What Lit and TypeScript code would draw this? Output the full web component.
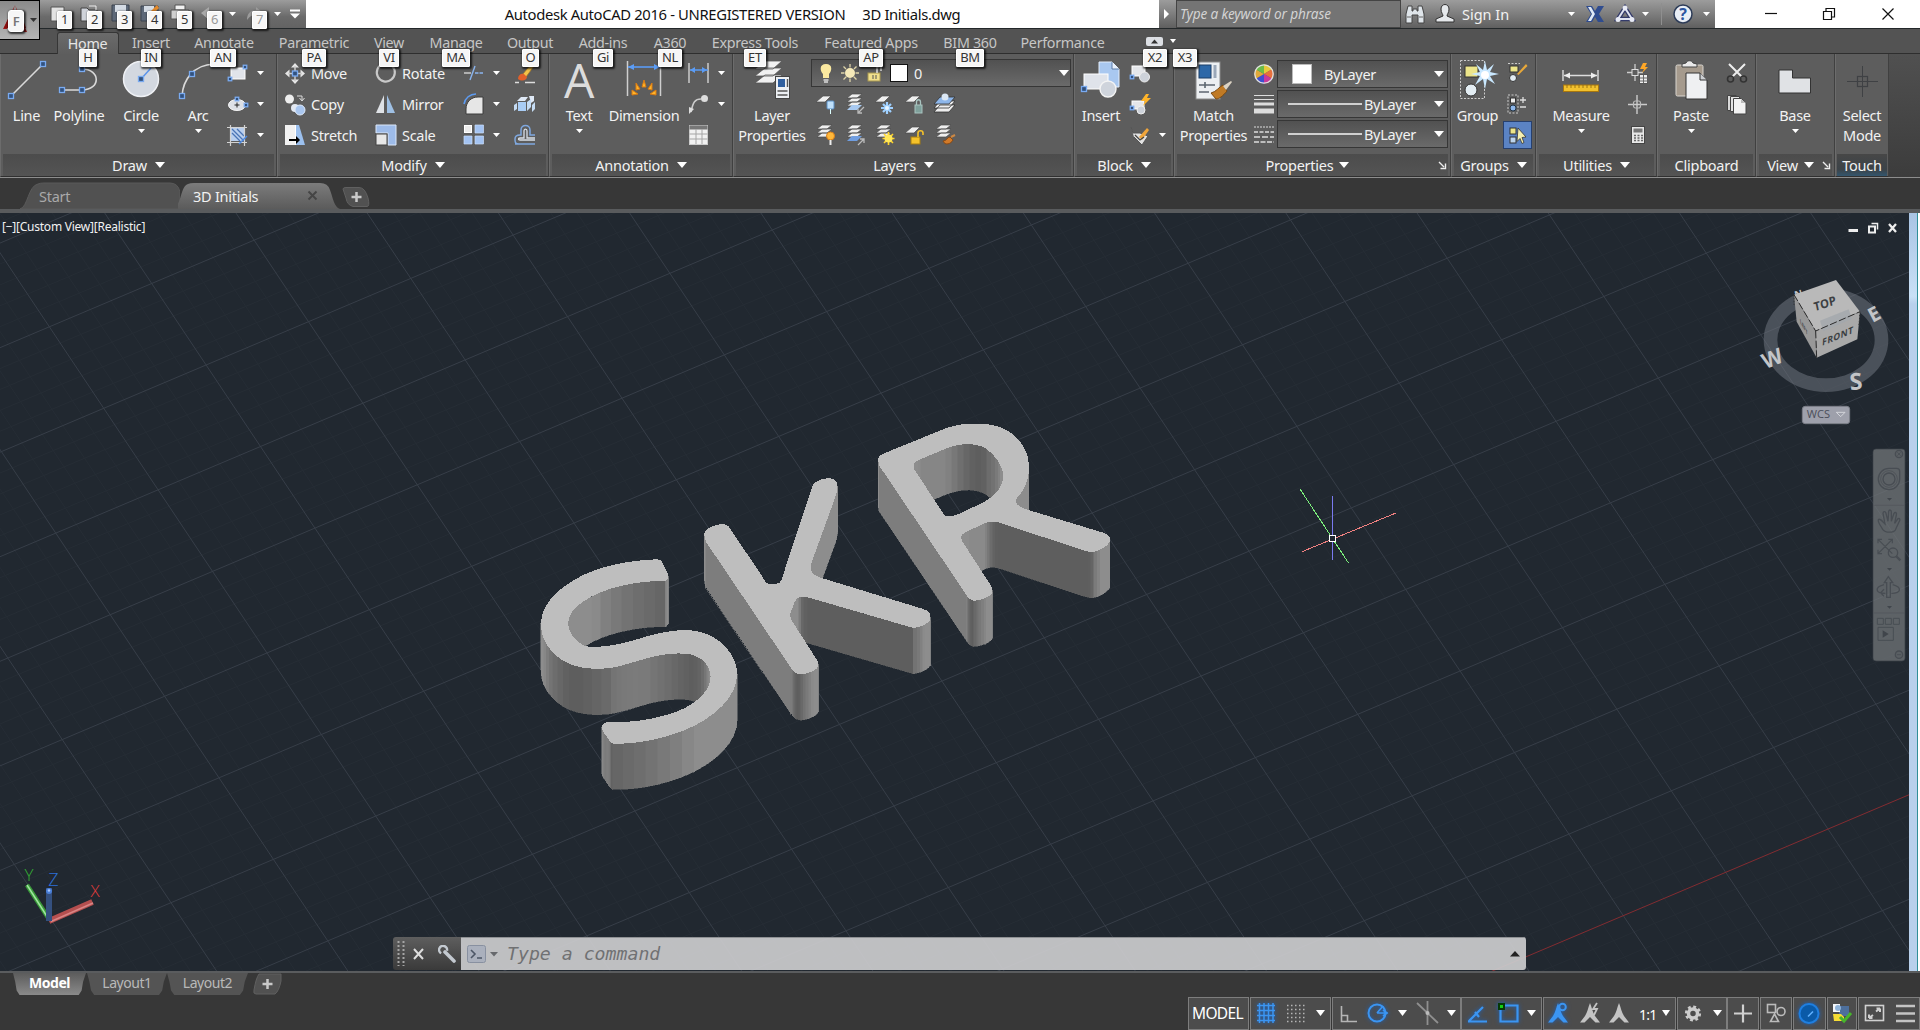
import { LitElement, html, svg, css, nothing } from "lit";
import { customElement } from "lit/decorators.js";

type Cell = [left: number, width: number, content: unknown];

/* Lays cells out in a flex row; each left edge is turned into the gap from the previous cell. */
const row = (origin: number, cells: Cell[], cls = "cell") => {
  let x = origin;
  return cells.map(([left, width, content]) => {
    const gap = left - x;
    x = left + width;
    return html`<div class=${cls} style="margin-left:${gap}px;width:${width}px">${content}</div>`;
  });
};

const icon = (w: number, h: number, body: unknown, box = `0 0 ${w} ${h}`) =>
  html`<svg class="ic" width=${w} height=${h} viewBox=${box} fill="none">${body}</svg>`;

const node = (x: number, y: number, s = 5) =>
  svg`<rect x=${x - s / 2} y=${y - s / 2} width=${s} height=${s} fill="#32527e" stroke="#79aaf0" stroke-width="1.3"/>`;

const arrow = (w = 7, h = 4) => icon(w, h, svg`<path d="M0 0H${w}L${w / 2} ${h}Z" fill="#fff"/>`);

/* ---------- large ribbon icons (40 x 44) ---------- */
const B = {
  line: svg`<path d="M5 38L36 7" stroke="#d9d9d9" stroke-width="1.6"/>${node(4, 39)}${node(36, 7)}`,
  polyline: svg`<path d="M3 33H23C42 33 42 12 23 12" stroke="#d9d9d9" stroke-width="1.6"/>${node(3, 33)}${node(23, 33)}${node(23, 12)}`,
  circle: svg`<circle cx="20" cy="22" r="17.5" fill="#d3d8e0" stroke="#eef0f4" stroke-width="1.5"/><path d="M20 22L30 11" stroke="#5b94ea" stroke-width="1.5"/>${node(20, 22)}`,
  arc: svg`<path d="M4 39C5 23 15 8 36 7" stroke="#d9d9d9" stroke-width="1.6"/>${node(4, 39)}${node(14, 17)}${node(36, 7)}`,
  dimension: svg`<path d="M3.500 4V39M36.500 4V39" stroke="#cfcfcf" stroke-width="1.5"/><path d="M4 10H36" stroke="#5b9cf5" stroke-width="1.6"/><path d="M4 10l6-3v6zM36 10l-6-3v6z" fill="#5b9cf5"/><path d="M20 23l2 7h-4zM12 26l4 6-4 1zM28 26l-4 6 4 1zM8 33l6 4-6 1zM32 33l-6 4 6 1z" fill="#ffb52b" stroke="#d97a12" stroke-width="1"/>`,
  layers: svg`<path d="M13 4h17l-9 8H3z M13 11h17l-9 8H3z M13 18h17l-9 8H3z" fill="#f1f1f1" stroke="#555" stroke-width=".8"/><rect x="23.500" y="19.500" width="14" height="22" fill="#eceff3" stroke="#444"/><rect x="26" y="22" width="7" height="8" fill="#2f5f9f"/><path d="M25.500 34h10M25.500 38h10M35.500 22v8" stroke="#555" stroke-width="1.4"/>`,
  insert: svg`<path d="M18 5h13l7 7v18H18z" fill="#a9c8f0" stroke="#e4eefc"/><path d="M31 5v7h7" fill="#e8f1fc" stroke="#5d7da8"/><rect x="3" y="17" width="24" height="15" fill="#dfe3ea" stroke="#fff"/><circle cx="27" cy="32" r="8" fill="#cfd4dc" stroke="#f4f4f4" stroke-width="1.4"/>${node(3, 32)}`,
  match: svg`<rect x="2" y="5" width="24" height="37" fill="#eceff2" stroke="#8a8a8a"/><rect x="5" y="8" width="12" height="13" fill="#2d68a8" stroke="#1d3e66"/><path d="M21 8v13" stroke="#9aa7b8" stroke-width="3"/><path d="M5 28h16M5 35h10M11 25v6" stroke="#5c6670" stroke-width="1.6"/><path d="M17 36c5-1 8-6 12-8l4 6c-4 5-8 8-11 8z" fill="#c07a25" stroke="#7a4a12"/><path d="M29 29l8-5 1 1-6 8z" fill="#dcd3c4"/>`,
  group: svg`<rect x="2.500" y="3.500" width="24" height="38" stroke="#ccc" stroke-dasharray="2 1.500"/><rect x="7" y="9" width="13" height="11" fill="#ece58a" stroke="#333"/><circle cx="13" cy="33" r="6" fill="#e3edf3" stroke="#333"/><path d="M27 4l2 9 7-6-4 8 9 2-9 2 5 8-8-5-2 10-2-10-8 6 5-9-9-2 9-2-4-8 7 6z" fill="#c9e8ff"/><circle cx="27" cy="18" r="4" fill="#fff"/>`,
  measure: svg`<path d="M2 13v11M37 13v11M3 18.500h33" stroke="#ddd" stroke-width="1.4"/><path d="M3 18.500l6-3v6zM36 18.500l-6-3v6z" fill="#eee"/><rect x="2.500" y="28" width="35" height="6.500" fill="#f2c12e" stroke="#a8770f"/><path d="M6 28v3m4-3v3m4-3v3m4-3v3m4-3v3m4-3v3m4-3v3m4-3v3" stroke="#8a6510" stroke-width=".8"/>`,
  paste: svg`<rect x="5" y="8" width="27" height="31" rx="1.500" fill="#a59a8d" stroke="#dad6d0"/><path d="M11 10V7l4-1c1-3 6-3 7 0l4 1v3z" fill="#e9e9e9" stroke="#444"/><path d="M15 16h14l7 7v19H15z" fill="#eff0f2" stroke="#333"/><path d="M29 16v7h7" fill="#cdd0d4" stroke="#333"/>`,
  base: svg`<path d="M4 13h13.500v8h18v15H4z" fill="#e0e2e5" stroke="#333"/>`,
  select: svg`<path d="M20.500 9v31M5 24.500h31" stroke="#3f4144"/><rect x="15.500" y="19.500" width="10" height="10" stroke="#3f4144" stroke-width="1.200"/>`,
};

/* ---------- small ribbon icons (22 x 22) ---------- */
const stack = (c = "#efefef") =>
  svg`<path d="M7 1h10l-5 4H2z M7 5h10l-5 4H2z M7 9h10l-5 4H2z" fill=${c} stroke="#4b4b4b" stroke-width=".7"/>`;
const sheet = svg`<path d="M8 3h8l-6 6H1z" fill="#efefef" stroke="#4b4b4b" stroke-width=".7"/>`;

const S = {
  rect: svg`<rect x="4" y="6" width="14" height="11" fill="#e1e4ea" stroke="#fff"/>${node(18, 5, 3.5)}${node(3, 17, 3.5)}`,
  ellipse: svg`<ellipse cx="10" cy="12" rx="8.500" ry="5.500" fill="#dde0e6" stroke="#f5f5f5"/><path d="M10 9.500v5M7.500 12h5" stroke="#222"/>${node(10, 6, 3.5)}${node(19, 12, 3.5)}`,
  hatch: svg`<rect x="4" y="4" width="13" height="13" fill="#b9cfee"/><path d="M5 9l8 8M5 5l12 12M10 5l7 7" stroke="#4a74b5" stroke-width="1.3"/><path d="M3.500 1v21M17.500 1v21M0 3.500h20M0 18.500h20" stroke="#d3d3d3" stroke-width="1.2"/><path d="M12 20l8-8" stroke="#4d8be6" stroke-width="1.5"/>`,
  move: svg`<path d="M11 1l4 4.500H7zM11 22l4-4.500H7zM1 11.500l4.500-4v8zM21 11.500l-4.500-4v8z" fill="#e6e6e6"/><path d="M11 4v15M4 11.500h14" stroke="#ccc" stroke-width="1.500"/>${node(11, 11.5, 5)}`,
  copy: svg`<circle cx="5.500" cy="6" r="4.500" fill="#eee"/><circle cx="11" cy="15" r="4" fill="#e4e9f2"/><circle cx="16" cy="17" r="5" fill="#a9c6ef" stroke="#dfeafa"/><path d="M13 3h5v4m-2.500-2L18 8l2.500-3" stroke="#ddd"/>`,
  stretch: svg`<path d="M1 1h11v20H1z" fill="#f1f1f1"/><path d="M12 1h3l6 20h-9z" fill="#9cc0ee"/><path d="M11.500 1v20" stroke="#fff"/><path d="M5 15h7v-3l4 4-4 4v-3H5z" fill="#000"/>`,
  rotate: svg`<path d="M17 4a9 9 0 1 1-9-2" stroke="#c9c9c9" stroke-width="2.200"/>`,
  mirror: svg`<path d="M9 2v18H1z" fill="#dfe2e6"/><path d="M12 2v18h8z" fill="#9fc0e4"/>`,
  scale: svg`<path d="M1 1h20v20h-8V9H1z" fill="#9dbbe9" stroke="#dbe7f8"/><rect x="1" y="10" width="11" height="11" fill="#e7e7e7" stroke="#444"/>`,
  trim: svg`<path d="M12 4L7 18" stroke="#8ab4ee" stroke-width="1.400"/><path d="M1 11h7" stroke="#ccc" stroke-width="1.500"/><path d="M12 11h9" stroke="#8ab4ee" stroke-width="1.400" stroke-dasharray="3.500 1"/>`,
  fillet: svg`<path d="M3 21V16C3 9 8 4 15 4h5v17z" fill="#e6e6e6" stroke="#3d3d3d"/><path d="M1 11C2 5 7 1 13 1" stroke="#5e9bf0" stroke-width="1.600"/>`,
  array: svg`<rect x="1.500" y="1.500" width="7" height="7" fill="#ececec" stroke="#fff"/><path d="M12 1h8.500v8H12zM1 12h8v8H1zM12 12h8.500v8H12z" fill="#a3c3f2" stroke="#c8dcfa" stroke-width=".7"/>`,
  erase: svg`<path d="M9 12L18 1l2 3-8 11z" fill="#f2c14a" stroke="#a87820" stroke-width=".7"/><path d="M4 17c0-4 3-6 6-5l3 3c0 3-5 5-9 2z" fill="#e0602b"/><path d="M1 20.500h4M11 20.500h10" stroke="#ddd" stroke-width="1.500"/>`,
  explode: svg`<path d="M3 8l4-4h7l-3 4zM15 3h5v5l-3 2z" fill="#dfe9f6"/><rect x="4" y="9" width="8" height="9" fill="#a9cdf5"/><path d="M13 9l4-3v8l-4 4zM18 12l3-3v7l-3 3zM0 12l3-2v6l-3 2z" fill="#c5dcf4"/>`,
  offset: svg`<path d="M1 20h20M1 15c0-3 2-4 5-4h1V6c0-6 9-6 9 0v5h5M1 15c0 3 0 5 4 5" stroke="#7fa8df" stroke-width="1.500"/><path d="M21 16H6c-2 0-2-2 0-2h4V7c0-2.500 3-2.500 3 0v7h8" stroke="#d9dfe8" stroke-width="1.300"/>`,
  linear: svg`<path d="M1 1v20M20 1v20" stroke="#ccc" stroke-width="1.500"/><path d="M2 8h18" stroke="#5b9cf5" stroke-width="1.500"/><path d="M2 8l5-3v6zM19 8l-5-3v6z" fill="#5b9cf5"/>`,
  leader: svg`<path d="M3 19C5 9 7 6 13 6" stroke="#ccc" stroke-width="1.600"/><circle cx="16.500" cy="5.500" r="3.500" fill="#ddd"/><path d="M1 21l0-7 5 2z" fill="#ddd"/>`,
  table: svg`<rect x="1.500" y="1.500" width="18" height="19" fill="#f1f1f1" stroke="#ccc"/><path d="M1.500 3.500h18" stroke="#777" stroke-width="4"/><path d="M1.500 10h18M1.500 15h18M8 5v15M14 5v15" stroke="#a5a5a5"/>`,
  l1: svg`${sheet}<rect x="12" y="8" width="7" height="8" rx="1" fill="#bfe0fb" stroke="#5a8fc5"/><path d="M15.500 16v5" stroke="#dff"/>`,
  l2: svg`${stack()}<path d="M7 12h10l-5 5H2z" fill="#a8c9f0"/><path d="M19 14l-6 6m0-4v4h4" stroke="#bbb" stroke-width="1.300"/>`,
  l3: svg`${sheet}<path d="M13 9v12M7 15h12M9 11l8 8M17 11l-8 8" stroke="#9fd0ff" stroke-width="2.200"/><circle cx="13" cy="15" r="2" fill="#e8f5ff"/>`,
  l4: svg`${sheet}<rect x="11" y="12" width="7" height="8" fill="#7fa09b" stroke="#a9c4c0"/><path d="M12.500 12V9c0-3 4-3 4 0v3" stroke="#a9c4c0" stroke-width="1.300"/>`,
  l5: svg`<path d="M6 12h15l-6 7H0zM6 8h15l-6 7H0z" fill="#eee" stroke="#333" stroke-width=".8"/><path d="M6 4h15l-6 7H0z" fill="#8db6ea" stroke="#333" stroke-width=".8"/><circle cx="11" cy="4" r="3.500" fill="#dce8f5"/>`,
  l6: svg`${stack()}<circle cx="15.500" cy="12" r="4" fill="#ffb83a" stroke="#d9801a"/><path d="M15.500 16v5" stroke="#eee" stroke-width="2"/>`,
  l7: svg`${stack()}<path d="M7 12h10l-5 5H2z" fill="#6f9de0"/><path d="M13 21l6-6m-4 0h4v4" stroke="#bbb" stroke-width="1.300"/>`,
  l8: svg`${stack()}<path d="M14.500 8v13M8.500 14.500h12M10 10l9 9M19 10l-9 9" stroke="#ffd42a" stroke-width="1.600"/><circle cx="14.500" cy="14.500" r="4" fill="#ffe75a"/>`,
  l9: svg`${sheet}<rect x="7" y="13" width="9" height="7" fill="#f5c22a" stroke="#a87f10"/><path d="M14 13V9c0-3 5-3 5 0v2" stroke="#f5c22a" stroke-width="1.600"/>`,
  l10: svg`${stack()}<path d="M9 17c4 0 4-4 7-4l3 3c-2 4-8 6-10 1z" fill="#d17a2a" stroke="#8a4a12"/><path d="M17 13l4-2" stroke="#c84" stroke-width="2"/>`,
  create: svg`<rect x="3" y="4" width="13" height="10" fill="#e4e6ea" stroke="#fff"/><circle cx="15.500" cy="15" r="5" fill="#cdd2da" stroke="#eee"/>${node(3, 15, 3.5)}`,
  edit: svg`<rect x="3" y="8" width="12" height="8" fill="#e4e6ea" stroke="#fff"/><circle cx="12" cy="17" r="4" fill="#cdd2da" stroke="#eee"/><path d="M17 1l-5 7h4l-2 5 8-8h-4l2-4z" fill="#ffb429"/>${node(3, 15, 3.5)}`,
  attr: svg`<path d="M2 3l2 6 7 0 8 3-6 9-8-8" fill="#e2e2e2" stroke="#555"/><path d="M10 13l8-9 2 2-7 10z" fill="#f0a53a"/><path d="M6 11l5 5 4-3" stroke="#444" stroke-width="1.300"/>`,
  lweights: svg`<path d="M1 2.500h20M1 6.500h20" stroke="#ddd" stroke-width="1.200"/><path d="M1 11h20" stroke="#ddd" stroke-width="3"/><path d="M1 18h20" stroke="#ddd" stroke-width="5"/>`,
  ltypes: svg`<path d="M1 3h20" stroke="#ddd" stroke-dasharray="2 1"/><path d="M1 8h20" stroke="#ddd" stroke-dasharray="4 1.500" stroke-width="1.300"/><path d="M1 13h20" stroke="#ddd" stroke-dasharray="6 2" stroke-width="1.500"/><path d="M1 18h20" stroke="#ddd" stroke-dasharray="5 1.500" stroke-width="1.500"/>`,
  wheel: svg`<path d="M11 12V2.500A9.500 9.500 0 0 1 19.200 7.200z" fill="#e8c93a"/><path d="M11 12L19.200 7.200A9.500 9.500 0 0 1 19.200 16.800z" fill="#e8703d"/><path d="M11 12L19.200 16.800A9.500 9.500 0 0 1 11 21.500z" fill="#c9399a"/><path d="M11 12V21.500A9.500 9.500 0 0 1 2.800 16.800z" fill="#3f4fd0"/><path d="M11 12L2.800 16.800A9.500 9.500 0 0 1 2.800 7.200z" fill="#e0a93a"/><path d="M11 12L2.800 7.200A9.500 9.500 0 0 1 11 2.500z" fill="#6cbb48"/><circle cx="11" cy="12" r="9.200" stroke="#e0e0e0" stroke-width="1.300"/>`,
  gedit: svg`<path d="M1 1.500h12" stroke="#ccc" stroke-dasharray="2 1.500"/><rect x="3" y="4" width="8" height="6" fill="#ece58a" stroke="#333"/><circle cx="6" cy="16" r="3.500" fill="#e3edf3" stroke="#333"/><path d="M10 12L19 2l1.500 2-9 9z" fill="#e8a83a"/>`,
  gadd: svg`<rect x="1" y="2" width="10" height="18" stroke="#ccc" stroke-dasharray="2 1.500"/><rect x="3.500" y="5" width="5" height="5" fill="#eee" stroke="#333"/><circle cx="6" cy="15" r="3" fill="#8db6ea" stroke="#234"/><path d="M13 7h6M16 4v6M13 14h6" stroke="#ddd" stroke-width="1.300"/>`,
  gsel: svg`<rect x="3" y="4" width="6" height="6" fill="#ece58a" stroke="#333"/><rect x="3" y="13" width="6" height="6" fill="#bcd4ee" stroke="#333"/><path d="M11 4l8 9-4 .5 2 5-2 1-2-5-3 3z" fill="#f5efb0" stroke="#333" stroke-width=".8"/>`,
  quick: svg`<path d="M8 2v6M8 13v6M0 10.500h5M11 10.500h5" stroke="#ccc" stroke-width="1.300"/><rect x="5" y="7.500" width="6" height="6" stroke="#ddd"/><path d="M16 1l-3 6h4l-2 4 6-6h-3l2-4z" fill="#ffa726"/><rect x="12.500" y="12.500" width="8" height="9" fill="#eee" stroke="#555"/><path d="M13 16h8M13 19h8M16.500 13v8" stroke="#666"/>`,
  point: svg`<path d="M10 2v19M1 11.500h19" stroke="#ccc" stroke-width="1.400"/><rect x="6.500" y="8" width="7" height="7" rx="2" stroke="#bbb" stroke-width="1.200"/>`,
  calc: svg`<rect x="4.500" y="2.500" width="13" height="17" fill="#e8e8e8" stroke="#444"/><rect x="6.500" y="4.500" width="9" height="4" fill="#777"/><path d="M7 11.500h9M7 14h9M7 16.500h9" stroke="#666" stroke-width="1.600" stroke-dasharray="2 1.500"/>`,
  cut: svg`<path d="M3 2l13 13M19 2L6 15" stroke="#eee" stroke-width="2"/><circle cx="4.500" cy="17" r="3" stroke="#333" stroke-width="1.600"/><circle cx="17.500" cy="17" r="3" stroke="#333" stroke-width="1.600"/>`,
  copyc: svg`<path d="M1.500 2.500h9v15h-9z" fill="#d9d9d9" stroke="#444"/><path d="M4.500 3.500h9v15h-9z" fill="#e2e2e2" stroke="#444"/><path d="M7.500 5.500h8l4.500 4.500v11H7.500z" fill="#f2f2f2" stroke="#444"/><path d="M15 6v4h5" fill="#bbb"/>`,
};

const launcher = icon(9, 9, svg`<path d="M1 1l5 5M7.500 2.500v5h-5" stroke="#eee" stroke-width="1.400"/>`);

const big = (body: unknown, lines: string[], drop = false) => html`<div class="big">
  ${icon(40, 44, body)}
  <div class="blabel">${lines.map((l) => html`<div>${l}</div>`)}</div>
  ${drop ? html`<div class="bdrop">${arrow()}</div>` : nothing}
</div>`;

const col = (items: unknown[]) => html`<div class="col">${items.map((i) => html`<div class="srow">${i}</div>`)}</div>`;
const s = (b: unknown) => icon(22, 22, b);
const arrows = (n: boolean[]) => col(n.map((v) => (v ? arrow() : nothing)));

interface Panel { x: number; w: number; title: string; drop?: boolean; launch?: boolean; touch?: boolean; cells: Cell[]; }

const combo = (body: unknown) => html`<div class="combo">${body}<span class="fill"></span>${arrow(10, 6)}</div>`;
const rule = html`<span class="rule"></span>`;

const PANELS: Panel[] = [
  { x: 0, w: 277, title: "Draw", drop: true, cells: [
    [4, 45, big(B.line, ["Line"])], [51, 56, big(B.polyline, ["Polyline"])], [116, 50, big(B.circle, ["Circle"], true)],
    [175, 46, big(B.arc, ["Arc"], true)], [227, 22, col([s(S.rect), s(S.ellipse), s(S.hatch)])], [257, 8, arrows([true, true, true])] ] },
  { x: 277, w: 272, title: "Modify", drop: true, cells: [
    [284, 22, col([s(S.move), s(S.copy), s(S.stretch)])], [311, 58, col(["Move", "Copy", "Stretch"])],
    [375, 22, col([s(S.rotate), s(S.mirror), s(S.scale)])], [402, 50, col(["Rotate", "Mirror", "Scale"])],
    [463, 22, col([s(S.trim), s(S.fillet), s(S.array)])], [493, 8, arrows([true, true, true])],
    [514, 22, col([s(S.erase), s(S.explode), s(S.offset)])] ] },
  { x: 549, w: 184, title: "Annotation", drop: true, cells: [
    [558, 42, html`<div class="big"><div class="glyphA">A</div><div class="blabel">Text</div><div class="bdrop">${arrow()}</div></div>`],
    [607, 74, big(B.dimension, ["Dimension"])], [688, 22, col([s(S.linear), s(S.leader), s(S.table)])], [718, 8, arrows([true, true, false])] ] },
  { x: 733, w: 341, title: "Layers", drop: true, cells: [
    [737, 70, big(B.layers, ["Layer", "Properties"])],
    [811, 260, html`<div class="laycol">
      <div class="combo lay">
        ${icon(14, 22, svg`<path d="M7 2c7 0 6 7 3 10v4H4v-4C1 9 0 2 7 2z" fill="#fbe9a0"/><path d="M4.500 18h5M5 20h4" stroke="#ddd" stroke-width="1.500"/>`)}
        ${icon(20, 20, svg`<path d="M10 1v18M1 10h18M3.500 3.500l13 13M16.500 3.500l-13 13" stroke="#ddd3a8" stroke-width="1.300" stroke-dasharray="3.500 11 3.500 0"/><circle cx="10" cy="10" r="5" fill="#f5e9b8"/>`)}
        ${icon(14, 20, svg`<rect x="1" y="10" width="12" height="8" fill="#f1e08c" stroke="#a89850"/><path d="M6 12v4M9 12v4" stroke="#555"/><path d="M10 10V4l4-1v5" stroke="#ddd" stroke-width="1.500"/>`)}
        <span class="swatch"></span><span>0</span><span class="fill"></span>${arrow(10, 6)}
      </div>
      <div class="laygrid">${[S.l1, S.l2, S.l3, S.l4, S.l5, S.l6, S.l7, S.l8, S.l9, S.l10].map(s)}</div>
    </div>`] ] },
  { x: 1074, w: 100, title: "Block", drop: true, cells: [
    [1078, 46, big(B.insert, ["Insert"])], [1129, 22, col([s(S.create), s(S.edit), s(S.attr)])], [1159, 8, arrows([false, false, true])] ] },
  { x: 1174, w: 277, title: "Properties", drop: true, launch: true, cells: [
    [1178, 71, big(B.match, ["Match", "Properties"])], [1253, 22, col([s(S.wheel), s(S.lweights), s(S.ltypes)])],
    [1277, 171, html`<div class="procol">${combo(html`<span class="swatch2"></span><span>ByLayer</span>`)}${combo(html`${rule}<span>ByLayer</span>`)}${combo(html`${rule}<span>ByLayer</span>`)}</div>`] ] },
  { x: 1451, w: 85, title: "Groups", drop: true, cells: [
    [1455, 45, big(B.group, ["Group"])], [1503, 29, html`<div class="grp">${col([s(S.gedit), s(S.gadd), html`<span class="hot">${s(S.gsel)}</span>`])}</div>`] ] },
  { x: 1536, w: 121, title: "Utilities", drop: true, cells: [
    [1551, 60, big(B.measure, ["Measure"], true)], [1627, 22, col([s(S.quick), s(S.point), s(S.calc)])] ] },
  { x: 1657, w: 99, title: "Clipboard", cells: [
    [1671, 40, big(B.paste, ["Paste"], true)], [1726, 22, col([s(S.cut), s(S.copyc), nothing])] ] },
  { x: 1756, w: 79, title: "View", drop: true, launch: true, cells: [[1774, 42, big(B.base, ["Base"], true)]] },
  { x: 1835, w: 54, title: "Touch", touch: true, cells: [[1838, 48, big(B.select, ["Select", "Mode"])]] },
];

const TABS: [string, number, number][] = [
  ["Home", 57, 62], ["Insert", 121, 60], ["Annotate", 181, 86], ["Parametric", 267, 94], ["View", 361, 56], ["Manage", 417, 78],
  ["Output", 495, 70], ["Add-ins", 565, 76], ["A360", 641, 58], ["Express Tools", 699, 112], ["Featured Apps", 811, 120],
  ["BIM 360", 931, 78], ["Performance", 1009, 107],
];

const TIPS: [string, number, number, number][] = [
  ["1", 57, 11, 15], ["2", 87, 11, 15], ["3", 117, 11, 15], ["4", 147, 11, 15], ["5", 177, 11, 15],
  ["H", 79, 49, 18], ["IN", 141, 49, 20], ["AN", 210, 49, 26], ["PA", 302, 49, 24], ["VI", 379, 49, 20], ["MA", 442, 49, 28],
  ["O", 522, 49, 17], ["Gi", 593, 49, 20], ["NL", 658, 49, 24], ["ET", 744, 49, 22], ["AP", 859, 49, 24], ["BM", 956, 49, 28],
  ["X2", 1143, 49, 24], ["X3", 1173, 49, 24],
];
const DIM_TIPS: [string, number, number, number][] = [["6", 207, 11, 15], ["7", 252, 11, 15], ["F", 8, 10, 16]];

/* ---------- drawing geometry ---------- */
type Pt = [number, number];
const U: Pt = [102.35, -43.3];
const V: Pt = [54.4, 81.55];
const ORIGIN: Pt = [206.1, 365];
const at = (a: number, b: number): Pt => [ORIGIN[0] + a * U[0] + b * V[0], ORIGIN[1] + a * U[1] + b * V[1]];

const gridPath = (minor: boolean) => {
  let d = "";
  const n = minor ? 5 : 1;
  for (let i = -12 * n; i <= 24 * n; i++) {
    if (minor && i % 5 === 0) continue;
    const k = i / n;
    const [x1, y1] = at(k, -20), [x2, y2] = at(k, 30);
    d += `M${x1.toFixed(1)} ${y1.toFixed(1)}L${x2.toFixed(1)} ${y2.toFixed(1)}`;
    if (!minor && k === 11) continue;
    const [x3, y3] = at(-20, k), [x4, y4] = at(30, k);
    d += `M${x3.toFixed(1)} ${y3.toFixed(1)}L${x4.toFixed(1)} ${y4.toFixed(1)}`;
  }
  return d;
};

/* Outlines are kept in drawing units; SX and SY bring them to pixels. */
const SX = 620 / 1568, SY = 1 / 3, DEPTH = 137.5;
const SOLIDS: { outer: string; hole?: string }[] = [
  { outer: "M345 478 C358 478 358 485 362 494 L375 522 C376 534 374 541 366 543 C310 541 230 558 180 590 C135 620 122 645 122 670 C122 700 140 722 165 739 C205 744 245 735 290 720 C330 705 370 692 415 690 C455 690 490 705 515 735 C537 762 549 790 549 822 C549 880 510 935 440 978 C370 1018 290 1033 235 1031 C228 1028 224 1018 220 1011 C212 998 207 990 207 980 C210 968 220 964 232 965 L258 966 C310 964 370 950 415 925 C460 897 482 865 482 828 C480 798 465 778 440 766 C415 756 370 760 330 772 C290 785 260 797 230 804 C170 812 125 800 95 770 C65 740 53 710 53 670 C53 610 100 560 160 525 C220 492 290 480 345 478" },
  { outer: "M466 403 C466 390 478 383 490 378 C505 370 520 370 528 380 L612 528 C618 542 622 549 630 552 C642 553 655 553 660 543 C664 535 665 525 668 515 L737 268 C740 248 748 243 770 236 C790 230 803 240 803 258 C803 275 795 300 788 322 L736 492 C732 512 738 524 760 533 L1020 627 C1038 634 1040 645 1037 660 C1030 672 1015 680 995 684 L728 592 C710 589 700 591 695 605 L684 640 C682 655 688 664 694 674 L750 778 C757 790 756 800 748 808 C735 818 715 825 705 822 C695 820 690 812 685 803 L470 425 Z" },
  { outer: "M906 182 C906 168 912 165 925 158 L1070 88 C1110 70 1135 71 1160 71 C1215 72 1245 95 1265 125 C1280 150 1287 170 1287 205 C1287 240 1275 270 1258 292 C1248 305 1255 318 1280 328 L1475 398 C1492 405 1493 412 1491 426 C1485 438 1470 450 1450 456 C1440 457 1430 452 1420 449 L1210 367 C1195 362 1185 365 1175 370 L1135 392 C1115 402 1113 410 1118 423 L1190 555 C1197 570 1196 578 1190 585 C1178 595 1160 602 1148 602 C1138 600 1132 592 1128 583 L908 196 Z",
    hole: "M996 202 C994 190 1000 184 1012 178 L1075 147 C1110 130 1150 125 1180 147 C1210 175 1222 205 1222 230 C1220 265 1200 290 1170 308 L1110 342 C1090 350 1078 352 1072 343 L998 210 Z" },
];

const flatten = (d: string): Pt[] => {
  const out: Pt[] = [];
  for (const m of d.matchAll(/([MLC])([^MLCZ]*)/g)) {
    const n = m[2].trim().split(/\s+/).map(Number);
    if (m[1] !== "C") { out.push([n[0], n[1]]); continue; }
    const p = out[out.length - 1];
    const span = Math.hypot(n[4] - p[0], n[5] - p[1]);
    const steps = span > 45 ? 7 : 5;
    for (let i = 1; i <= steps; i++) {
      const t = i / steps, q = 1 - t;
      out.push([0, 1].map((k) => q * q * q * p[k] + 3 * q * q * t * n[k] + 3 * q * t * t * n[2 + k] + t * t * t * n[4 + k]) as Pt);
    }
  }
  return out.map(([x, y]) => [520 + x * SX, 400 + y * SY]);
};

const DET = U[0] * V[1] - U[1] * V[0];
const shade = (dx: number, dy: number) => {
  const a = (dx * V[1] - dy * V[0]) / DET, b = (U[0] * dy - U[1] * dx) / DET;
  const angle = Math.atan2(-a, b) - (138 * Math.PI) / 180;
  const v = Math.round(Math.min(141, 94 + 122 * (1 - Math.cos(angle))));
  return `rgb(${v},${v},${v})`;
};

const solid = ({ outer, hole }: { outer: string; hole?: string }) => {
  const rings = [flatten(outer)];
  if (hole) rings.push(flatten(hole).reverse());
  const h = DEPTH * SY;
  const walls: { y: number; d: string; c: string }[] = [];
  for (const r of rings)
    r.forEach(([x1, y1], i) => {
      const [x2, y2] = r[(i + 1) % r.length];
      if (x2 - x1 >= -0.01) return;
      walls.push({ y: (y1 + y2) / 2, c: shade(x2 - x1, y2 - y1), d: `M${x1} ${y1}L${x2} ${y2}V${y2 + h}L${x1} ${y1 + h}Z` });
    });
  walls.sort((p, q) => p.y - q.y);
  const top = rings.map((r) => "M" + r.map((p) => p.map((n) => n.toFixed(2)).join(" ")).join("L") + "Z").join("");
  return svg`${walls.map((w) => svg`<path d=${w.d} fill=${w.c} stroke=${w.c} stroke-width=".5"/>`)}<path d=${top} fill="#bebebe" fill-rule="evenodd"/>`;
};

@customElement("cad-viewport")
export class CadViewport extends LitElement {
  static styles = css`
    :host { display: block; position: relative; height: 758px; background: #212830; overflow: hidden; font-family: "Open Sans", "Noto Sans", sans-serif; }
    svg { display: block; flex: none; }
    .label { position: absolute; left: 2px; top: 5px; font: 12px/18px "Noto Sans", sans-serif; color: #f2f2f2; letter-spacing: -0.24px; white-space: nowrap; }
    .cmd { position: absolute; left: 393px; top: 724px; width: 1133px; height: 33px; display: flex; border-radius: 3px; overflow: hidden; }
    .grip { width: 68px; display: flex; align-items: center; background: linear-gradient(#5e5e5e, #3a3a3a); box-sizing: border-box; padding-left: 4px; gap: 14px; }
    .grip .x { margin-left: -6px; }
    .input { flex: 1; display: flex; align-items: center; background: rgba(204, 204, 206, 0.92); border-top: 1px solid #8f9194; padding: 0 6px; }
    .ph { font: italic 18.2px/30px "DejaVu Sans Mono", monospace; color: #707173; margin-left: 9px; flex: 1; }
    .tri { margin-left: 4px; }
  `;
  render() {
    const [rx1, ry1] = at(-4, 11), [rx2, ry2] = at(16, 11);
    return html`
      <svg width="1909" height="758" viewBox="0 213 1909 758" fill="none">
        <path d=${gridPath(true)} stroke="#262d35" stroke-width="1"/>
        <path d=${gridPath(false)} stroke="#373e48" stroke-width="1"/>
        <path d="M${rx1} ${ry1}L${rx2} ${ry2}" stroke="#832c31"/>
        <g shape-rendering="crispEdges">${SOLIDS.map(solid)}</g>
        <g shape-rendering="crispEdges">
          <path d="M1332.500 496V560" stroke="#7a7af0"/>
          <path d="M1300 489L1348.500 563" stroke="#7cf07c"/>
          <path d="M1302.500 551.500L1396 513" stroke="#f08080"/>
          <rect x="1329.500" y="535.500" width="6" height="6" stroke="#fff" fill="#212830"/>
        </g>
        <g stroke-linecap="butt">
          <path d="M49 921L92.500 902" stroke="#b54f4f" stroke-width="6"/><path d="M51 921.500L93 903" stroke="#d98585" stroke-width="1.500"/>
          <path d="M49 919L27 885" stroke="#3a9a3a" stroke-width="4.500"/><path d="M48 918L27 885" stroke="#9fe59f" stroke-width="1.500"/>
          <path d="M49 921V888" stroke="#34507f" stroke-width="6"/><circle cx="49" cy="891" r="3" fill="#4a7fd8"/><circle cx="49" cy="890.500" r="1.200" fill="#a9c8ff"/>
        </g>
        <g font-family="Open Sans" font-weight="300" font-size="17" text-anchor="middle">
          <text x="29" y="881" fill="#35b035">Y</text><text x="53.500" y="885.500" fill="#2c6fd6" font-size="18">Z</text><text x="95" y="897" fill="#e03c3c">X</text>
        </g>
        <g transform="translate(1700 250) scale(.33333)">
          <path fill-rule="evenodd" fill="#737a83" fill-opacity=".5" d="M191 270a187 156 0 1 0 374 0a187 156 0 1 0-374 0M232 270a146 115 0 1 0 292 0a146 115 0 1 0-292 0"/>
          <g font-family="Open Sans" font-weight="700" fill="#c3c5c8" text-anchor="middle">
            <text font-size="64" transform="translate(225 346) rotate(-22)">W</text>
            <text font-size="70" transform="translate(470 419) rotate(-5)">S</text>
            <text font-size="60" transform="translate(532 211) rotate(-28)">E</text>
            <text font-size="30" transform="translate(298 142) rotate(-15)">N</text>
          </g>
          <path d="M282 134L408 90L480 185L347 243Z" fill="#b9b9b9"/>
          <path d="M347 243L480 185L472 268L350 323Z" fill="#a9a9a9"/>
          <path d="M282 134L347 243L350 323L290 215Z" fill="#989898"/>
          <path d="M360 212L446 178L456 206L370 244Z" fill="#a2a7ad" fill-opacity=".8"/>
          <path d="M282 134L347 243L480 185M347 243L350 323" stroke="#2c2c2c" stroke-width="3" stroke-dasharray="22 7"/>
          <path d="M282 134V165M480 185L477 225" stroke="#333" stroke-width="3" stroke-dasharray="5 4"/>
          <g font-family="Open Sans" font-weight="700" fill="#3c3f42" text-anchor="middle">
            <text font-size="35" transform="matrix(.93 -.3 .2 1 377 173)">TOP</text>
            <text font-size="28" transform="matrix(.92 -.38 -.05 1 413 268)" letter-spacing="1.500">FRONT</text>
            <text font-size="20" transform="matrix(.5 .85 .1 1 312 238)">LEFT</text>
          </g>
          <rect x="307" y="469" width="142" height="52" rx="9" fill="#9ea0ab" stroke="#7b7e88" stroke-width="3"/>
          <text x="320" y="503" font-family="Open Sans" font-size="30" fill="#4b4e5a" textLength="70" lengthAdjust="spacingAndGlyphs">WCS</text>
          <path d="M409 487H435L422 500Z" stroke="#dcdde2" stroke-width="2.500"/>
          <rect x="519" y="597" width="96" height="636" rx="9" fill="#74797c" fill-opacity=".72" stroke="#3c4248" stroke-width="2"/>
          <path d="M521 766H613M521 1089H613" stroke="#50555a" stroke-width="2"/>
          <g stroke="#484d53" stroke-width="4">
            <circle cx="597" cy="612" r="11" fill="#5a5f63"/><path d="M592 607l10 10M602 607l-10 10" stroke-width="2.500"/>
            <circle cx="597" cy="1214" r="11" fill="#5a5f63"/><path d="M591 1214h12" stroke-width="2.500"/>
            <path d="M567 655H590Q599 655 599 664V687A32 32 0 1 1 567 655Z"/><circle cx="567" cy="687" r="18"/><circle cx="567" cy="687" r="25" stroke-width="2"/>
            <path d="M548 838C540 824 530 812 536 808C543 806 550 818 555 822L549 790C550 783 556 784 558 790L564 814L566 784C568 778 574 779 574 786V814L582 790C586 785 591 788 589 795L584 820L594 806C600 804 601 809 598 814L586 840C582 848 556 850 548 838Z"/>
            <path d="M534 868L577 911M577 868L534 911M534 880V868H546M565 868H577V880M534 899V911H546" stroke-width="3.500"/>
            <circle cx="579" cy="908" r="14"/><path d="M588 918L601 931" stroke-width="7"/>
            <path d="M560 1042V998H553L565 980L578 998H571V1042Z"/><path d="M552 1004C523 1012 525 1030 556 1030M578 1004C607 1012 604 1030 574 1030M552 1018L542 1028L552 1039" stroke-width="4"/>
            <path d="M532 1105H550V1123H532ZM556 1105H574V1123H556ZM580 1105H598V1123H580ZM534 1132H580V1171H534Z" stroke-width="3"/>
          </g>
          <path d="M561 744H576L568.500 752ZM561 954H576L568.500 962ZM561 1068H576L568.500 1076ZM548 1141L566 1152L548 1163Z" fill="#40454b"/>
        </g>
        <path d="M1848.500 229H1858V232H1848.500Z" fill="#eee"/>
        <path d="M1869 226.500H1875V232.500H1869Z" stroke="#eee" stroke-width="2"/><path d="M1871.500 223.500H1877.500V229.500" stroke="#eee" stroke-width="1.500"/>
        <path d="M1889 224L1896 232M1896 224L1889 232" stroke="#eee" stroke-width="2.300"/>
      </svg>
      <div class="label">[−][Custom View][Realistic]</div>
      <div class="cmd">
        <div class="grip">
          <svg width="8" height="25"><path d="M1.500 0V25M6.500 0V25" stroke="#a5a5a5" stroke-width="2" stroke-dasharray="2 2"/></svg>
          <svg class="x" width="11" height="12" viewBox="0 0 11 12"><path d="M1 1L10 11M10 1L1 11" stroke="#ddd" stroke-width="2"/></svg>
          <svg width="18" height="18" viewBox="0 0 18 18" fill="none"><path d="M7 7L16 16" stroke="#c3c9d0" stroke-width="3.600" stroke-linecap="round"/><path d="M6 1.500A4 4 0 1 0 9 7" stroke="#c3c9d0" stroke-width="2.400" transform="rotate(95 5.500 5)"/></svg>
        </div>
        <div class="input">
          <svg width="19" height="18" viewBox="0 0 19 18" fill="none"><rect x=".5" y=".5" width="18" height="17" rx="2" fill="#aab0bd" stroke="#8890a0"/><path d="M4 5l4 4-4 4M10 13h5" stroke="#4c5666" stroke-width="1.600"/></svg>
          <svg class="tri" width="8" height="5"><path d="M0 0H8L4 4.500Z" fill="#66686c"/></svg>
          <span class="ph">Type a command</span>
          <svg width="10" height="6"><path d="M0 5.500H10L5 0Z" fill="#222"/></svg>
        </div>
      </div>`;
  }
}

const blue = "#3b95f2";
const st = (w: number, body: unknown, glow = false) => html`<svg class=${glow ? "ic glow" : "ic"} width=${w} height="24" viewBox="0 0 ${w} 24" fill="none">${body}</svg>`;
const person = (c: string) => svg`<path d="M10 2C12 7 12.500 11 15 15L20 21.500H15.500L10 16L4.500 21.500H0L5 15C7.500 11 8 7 10 2Z" fill=${c}/>`;

const STATUS: [number, number, Cell[]][] = [
  [1188, 61, [[1192, 54, html`<span class="model">MODEL</span>`]]],
  [1250, 81, [
    [1256, 20, st(20, svg`<path d="M3.500 2V22M8 2V22M12.500 2V22M17 2V22M1 4.500H19M1 9.500H19M1 14.500H19M1 19.500H19" stroke=${blue} stroke-width="1.500"/>`, true)],
    [1286, 20, st(20, svg`<path d="M1 4.500H19M1 8.500H19M1 12.500H19M1 16.500H19M1 20.500H19" stroke="#b5b5b5" stroke-width="1.500" stroke-dasharray="1.500 2.500"/>`)],
    [1316, 9, arrow(9, 6)] ]],
  [1332, 129, [
    [1339, 20, st(20, svg`<path d="M2.500 5V20.500H18M2.500 14.500H8.500V20.500" stroke="#b5b5b5" stroke-width="1.600"/>`)],
    [1367, 22, st(22, svg`<circle cx="10" cy="12" r="8.500" stroke=${blue} stroke-width="2"/><path d="M10 12H21M10 12L16 5M16 9l4 3-4 3" stroke=${blue} stroke-width="1.600"/>`, true)],
    [1398, 9, arrow(9, 6)],
    [1416, 22, st(22, svg`<path d="M11.500 0V24M1 2L22 22" stroke="#8f8f8f" stroke-width="1.800"/><circle cx="11.500" cy="12" r="2" fill="#bbb"/>`)],
    [1447, 9, arrow(9, 6)] ]],
  [1461, 81, [
    [1467, 20, st(20, svg`<path d="M1 20.500H20M2 20L16 6M8 11l4 5" stroke=${blue} stroke-width="2.200"/>`, true)],
    [1498, 21, st(21, svg`<path d="M7 4.500H19.500V20.500H2.500V9" stroke=${blue} stroke-width="2.200"/><rect x="1" y="3" width="5" height="5" fill="#15d015" stroke="#053a05" stroke-width="2"/>`, true)],
    [1527, 9, arrow(9, 6)] ]],
  [1543, 133, [
    [1548, 22, st(22, svg`${person(blue)}<circle cx="14.500" cy="6" r="3.300" stroke=${blue} stroke-width="2"/>`, true)],
    [1580, 22, st(22, svg`${person("#c4c4c4")}<path d="M17 2l-4 6h4l-3 6" stroke="#c4c4c4" stroke-width="1.800"/>`)],
    [1609, 21, st(21, person("#c4c4c4"))],
    [1639, 19, html`<span class="ratio">1:1</span>`], [1662, 8, arrow(8, 6)] ]],
  [1677, 50, [
    [1684, 18, st(18, svg`<circle cx="9" cy="12.500" r="4.500" stroke="#ccc" stroke-width="3.500"/><circle cx="9" cy="12.500" r="6.800" stroke="#ccc" stroke-width="2.600" stroke-dasharray="2.840 2.500"/>`)],
    [1713, 9, arrow(9, 6)] ]],
  [1727, 32, [[1734, 18, st(18, svg`<path d="M9 3.500V21.500M0 12.500H18" stroke="#d0d0d0" stroke-width="2.200"/>`)]]],
  [1760, 32, [[1766, 20, st(20, svg`<rect x="1.500" y="3.500" width="8" height="8" stroke="#bbb" stroke-width="1.600"/><circle cx="15" cy="10.500" r="4" stroke="#bbb" stroke-width="1.600"/><path d="M8.500 13L12.500 20.500H4.500Z" stroke="#bbb" stroke-width="1.600"/>`)]]],
  [1793, 33, [[1798, 22, st(22, svg`<circle cx="11" cy="12.500" r="9.500" fill="#0a5aa8" stroke="#1f7fe0" stroke-width="2"/><path d="M10 15.500l5-5" stroke="#5fb0ff" stroke-width="1.600"/>`, true)]]],
  [1827, 30, [[1832, 20, st(20, svg`<rect x="7" y="5" width="10" height="10" fill="#4d6f9c"/><rect x="1" y="3" width="7" height="8" fill="#f3f6fa"/><circle cx="6" cy="7" r="3" fill="#8fb3d9"/><path d="M1 13h8l3 3v4H2z" fill="#f7dd35"/><path d="M8 16l4 4 7-8" stroke="#47b52c" stroke-width="3"/>`)]]],
  [1858, 62, [
    [1864, 21, st(21, svg`<rect x="1.500" y="4.500" width="18" height="15" stroke="#d0d0d0" stroke-width="1.600"/><path d="M12 10.500L16 7.500M16 7.500H12.500M16 7.500V11M9 14L5 17M5 17H8.500M5 17V13.500" stroke="#d0d0d0" stroke-width="2"/>`)],
    [1896, 19, st(19, svg`<path d="M0 5H19M0 12.500H19M0 20H19" stroke="#c4c4c4" stroke-width="2.400"/>`)] ]],
];

const plusTab = (d: string, w: number, h: number) =>
  icon(w, h, svg`<path d=${d} fill="#515151" stroke="#606060"/><path d="M${w / 2} ${h / 2 - 5}v10M${w / 2 - 5} ${h / 2}h10" stroke="#c9c9c9" stroke-width="2.500"/>`);

@customElement("app-root")
export class AppRoot extends LitElement {
  static styles = css`
    :host { display: block; position: relative; width: 1920px; height: 1030px; overflow: hidden; background: #373737; font-family: "Noto Sans", "Open Sans", sans-serif; font-size: 14.5px; color: #f2f2f2; }
    * { box-sizing: border-box; }
    .ic { display: block; flex: none; overflow: visible; }
    .cell { flex: none; white-space: nowrap; }
    .top { display: flex; height: 29px; background: #fff; border-bottom: 1px solid #23282a; }
    .qat { width: 306px; display: flex; align-items: center; padding-left: 39px; background: linear-gradient(#9c9c9c, #6a6a6a 60%, #636363); }
    .title { width: 853px; text-align: center; color: #111; font-size: 14.8px; line-height: 29px; padding-right: 0; white-space: pre; letter-spacing: -0.35px; }
    .gap { display: inline-block; width: 17px; }
    .info { width: 556px; display: flex; align-items: center; background: linear-gradient(#9c9c9c, #5f5f5f); }
    .search { width: 225px; height: 28px; background: #747474; border: 1px solid #444; color: #d3d3d3; font-style: italic; font-size: 13.6px; line-height: 26px; padding-left: 3px; letter-spacing: -0.11px; }
    .win { flex: 1; display: flex; align-items: center; }
    .tabs { display: flex; height: 25px; background: #535353; border-bottom: 1px solid #2e2e2e; }
    .tab { flex: none; text-align: center; line-height: 27px; color: #c6c6c6; font-size: 14.3px; letter-spacing: -0.3px; white-space: nowrap; }
    .home { color: #e6e6e6; background: linear-gradient(#6b6b6b, #5d5d5d); border: 1px solid #363636; border-bottom: 0; border-radius: 3px 3px 0 0; margin-top: 3px; line-height: 21px; height: 23px; padding-right: 1px; }
    .mini { display: flex; align-items: center; gap: 7px; margin-left: 30px; height: 24px; }
    .ribbon { display: flex; height: 124px; background: linear-gradient(#505050, #3c3c3c); border-bottom: 1px solid #8d8d8d; }
    .panel { flex: none; display: flex; flex-direction: column; border-right: 1px solid #404040; border-left: 1px solid #6c6c6c; background: #5d5d5d; border-bottom: 1px solid #303030; }
    .body { display: flex; height: 100px; }
    .ptitle { height: 22px; display: flex; align-items: center; justify-content: center; background: linear-gradient(#4c4c4c, #545454); gap: 8px; margin: 0 2px; line-height: 22px; letter-spacing: -0.25px; }
    .ptitle .end { margin-left: auto; margin-right: 1px; }
    .ptitle .start { margin-left: auto; }
    .tight { gap: 6px; }
    .touch { background: linear-gradient(#474747, #3c4348 70%, #33566e); margin: 0 1px; }
    .big { display: flex; flex-direction: column; align-items: center; padding-top: 3px; letter-spacing: -0.3px; }
    .blabel { margin-top: 4px; line-height: 20px; text-align: center; }
    .bdrop { padding-top: 4px; }
    .glyphA { height: 44px; font: 48px/46px "Open Sans"; color: #dcdcdc; }
    .col { padding-top: 3px; letter-spacing: -0.3px; }
    .srow { height: 31px; display: flex; align-items: center; }
    .laycol { padding-top: 5px; }
    .combo { display: flex; align-items: center; height: 28px; border: 1px solid #363636; background: linear-gradient(#515151, #6a6a6a); padding-right: 3px; letter-spacing: -0.3px; }
    .lay { padding-left: 7px; gap: 7px; padding-right: 1px; }
    .fill { flex: 1; }
    .swatch { width: 18px; height: 18px; background: #fff; border: 1px solid #111; margin-left: 2px; margin-right: -1px; }
    .swatch2 { width: 20px; height: 20px; background: #fff; border: 1px solid #bbb; margin: 0 12px 0 14px; }
    .rule { width: 74px; height: 2px; background: #d0d0d0; margin: 0 2px 0 10px; }
    .procol { padding-top: 6px; display: flex; flex-direction: column; gap: 2px; }
    .laygrid { display: grid; grid-template-columns: repeat(5, 29.7px); grid-template-rows: 31px 31px; align-items: center; padding: 1px 0 0 4px; }
    .grp .srow { justify-content: center; }
    .hot { display: flex; width: 29px; height: 28px; align-items: center; justify-content: center; background: #5b83c4; border: 1px solid #27406e; }
    .files { display: flex; height: 31px; align-items: flex-end; background: #373737; }
    .ftab { position: relative; height: 27px; flex: none; display: flex; align-items: center; letter-spacing: -0.25px; }
    .ftab > svg.bgd { position: absolute; left: 0; top: 0; }
    .ftab > span { position: relative; }
    .ledge { height: 4px; background: #595b5d; }
    .stage { display: flex; height: 758px; }
    .stage cad-viewport { width: 1909px; flex: none; }
    .strip { width: 8px; background: linear-gradient(#a9c4e4, #c9e0f6 11%, #b8d0ec 12%, #b8d0ec); }
    .teal { width: 1px; background: #2f8f98; }
    .rest { width: 2px; background: #fff; }
    .layouts { display: flex; height: 26px; border-top: 2px solid #5a5c5e; }
    .ltab { position: relative; height: 22px; flex: none; line-height: 20px; text-align: center; color: #b9b9b9; font-size: 14px; letter-spacing: -0.45px; clip-path: polygon(0 0, 100% 0, 96% 40%, 94% 80%, 90% 100%, 9% 100%, 5% 80%, 3% 40%); background: #545454; }
    .ltab.on { background: linear-gradient(#5c5c5c, #8a8a8a); color: #fff; font-weight: 700; }
    .status { display: flex; height: 33px; }
    .sc { flex: none; display: flex; align-items: center; height: 33px; background: #4c4c4c; border: 1px solid #7d7d7d; }
    .sc .ic { margin-top: -1px; }
    .glow { filter: drop-shadow(0 0 2px #1a63c0); }
    .model { font-size: 15.5px; letter-spacing: -0.65px; line-height: 33px; color: #fff; }
    .ratio { font-size: 14px; letter-spacing: -0.8px; color: #fff; }
    .app { position: absolute; left: 0; top: 0; width: 40px; height: 40px; border: 1px solid #000; border-left: 0; background: linear-gradient(#8a8a8a, #b4b4b4); }
    .tip { position: absolute; height: 18px; background: #f6f6f6; border: 1px solid #fff; border-radius: 1px; box-shadow: 1px 1px 2px 1px rgba(0, 0, 0, 0.7); color: #333; font-size: 13px; line-height: 15px; text-align: center; letter-spacing: -0.3px; }
    .dim { color: #999; }
    .f { height: 22px; line-height: 20px; color: #777; font-weight: 600; border-radius: 3px; }
  `;

  private panel(p: Panel) {
    const label = html`<span>${p.title}</span>${p.drop ? arrow(10, 6) : nothing}`;
    return html`<div class="panel" style="width:${p.w}px">
      <div class="body">${row(p.x + 1, p.cells)}</div>
      <div class="ptitle ${p.touch ? "touch" : ""} ${p.launch ? "tight" : ""}">
        ${p.launch ? html`<span class="start"></span>${label}<span class="end">${launcher}</span>` : label}
      </div>
    </div>`;
  }

  render() {
    const bar = (w: number, b: unknown) => icon(w, 28, b);
    return html`
      <div class="top">
        <div class="qat">${row(39, [
          [50, 20, bar(20, svg`<path d="M1 7h13v14H1z" fill="#e3e3e3" stroke="#555"/>`)],
          [80, 20, bar(20, svg`<path d="M1 8h6l2 2h8v11H1z" fill="#cfd3da" stroke="#444"/><path d="M9 6h7v4" stroke="#eee"/>`)],
          [111, 20, bar(20, svg`<path d="M1 5h17v16H1z" fill="#5d6878" stroke="#3b424e"/><rect x="4" y="5" width="11" height="7" fill="#d4dbe4"/>`)],
          [140, 22, bar(22, svg`<path d="M1 6h17v15H1z" fill="#5d6878" stroke="#3b424e"/><rect x="4" y="6" width="10" height="6" fill="#d4dbe4"/><path d="M10 12l7-7 2 3-6 6z" fill="#e38a2b"/>`)],
          [170, 20, bar(20, svg`<path d="M5 5h10v5H5z" fill="#f1f1f1" stroke="#555"/><path d="M1 10h18v9H1z" fill="#cfcfcf" stroke="#555"/>`)],
          [201, 16, bar(16, svg`<path d="M0 13l8-6v4h6v5H8v4z" fill="#a9a9a9"/>`)],
          [229, 7, arrow()],
          [246, 18, bar(18, svg`<path d="M1 20c0-7 4-10 9-10V7l7 6-7 6v-4c-4 0-6 1-9 5z" fill="#9b9b9b"/>`)],
          [274, 7, arrow()],
          [290, 10, icon(10, 10, svg`<path d="M0 1.500H10" stroke="#fff" stroke-width="2"/><path d="M0 4.500H10L5 9.500Z" fill="#fff"/>`)],
        ])}</div>
        <div class="title">Autodesk AutoCAD 2016 - UNREGISTERED VERSION<span class="gap"></span>3D Initials.dwg</div>
        <div class="info">${row(1159, [
          [1164, 5, icon(5, 10, svg`<path d="M0 0L5 5L0 10Z" fill="#fff"/>`)],
          [1176, 225, html`<div class="search">Type a keyword or phrase</div>`],
          [1405, 20, icon(20, 20, svg`<path d="M3 2h4v5h1v-2h4v2h1V2h4l2 8v9h-6v-8H7v8H1v-9z" fill="#dfe5ea" stroke="#444"/><path d="M2 13h4M14 13h4" stroke="#666"/>`)],
          [1435, 20, icon(20, 20, svg`<path d="M6 5c0-6 8-6 8 0c0 4-2 5-2 7l7 3v3H1v-3l7-3c0-2-2-3-2-7z" fill="#e6e9ec" stroke="#333"/>`)],
          [1462, 48, "Sign In"],
          [1568, 7, arrow()],
          [1586, 18, icon(18, 18, svg`<path d="M0 1h6l3 5 3-5h6l-5 8 5 8h-6l-3-5-3 5H0l5-8z" fill="#2f4c8f"/><path d="M2 2h3l4 7-4 7H2l4-7z" fill="#dfe9f6"/>`)],
          [1615, 20, icon(20, 18, svg`<path d="M10 3L3 14h14z" stroke="#333a6a" stroke-width="4.500"/><path d="M10 3L3 14h14z" stroke="#dfe3f0" stroke-width="2"/><circle cx="10" cy="3" r="2.500" fill="#e8ebf5"/><circle cx="3" cy="14.500" r="2.500" fill="#e8ebf5"/><circle cx="17" cy="14.500" r="2.500" fill="#e8ebf5"/>`)],
          [1642, 7, arrow()],
          [1661, 1, icon(1, 22, svg`<path d="M.5 0V22" stroke="#8f8f8f"/>`)],
          [1673, 20, html`<svg class="ic" width="20" height="20" fill="none"><circle cx="10" cy="10" r="9" fill="#e9eef5" stroke="#2d3c58" stroke-width="1.500"/><text x="10" y="15.500" text-anchor="middle" font-size="16" font-weight="700" font-family="Open Sans" fill="#2c55a0">?</text></svg>`],
          [1703, 7, arrow()],
        ])}</div>
        <div class="win">${row(1715, [
          [1765, 12, icon(12, 12, svg`<path d="M0 5.500H12" stroke="#111" stroke-width="1.200"/>`)],
          [1823, 12, icon(12, 12, svg`<path d="M.5 3.500h8v8h-8zM3 3.500V.5h8.500v8.500H9" stroke="#111" stroke-width="1.200"/>`)],
          [1882, 12, icon(12, 12, svg`<path d="M.5 .5l11 11M11.500 .5l-11 11" stroke="#111" stroke-width="1.200"/>`)],
        ])}</div>
      </div>
      <div class="tabs">
        ${TABS.map(([t, x, w], i) => html`<div class="tab ${i === 0 ? "home" : ""}" style="width:${w}px;margin-left:${i === 0 ? x : i === 1 ? 2 : 0}px">${t}</div>`)}
        <div class="mini">${icon(17, 9, svg`<rect width="17" height="9" rx="2" fill="#dcdfe4"/><path d="M5 6.500h7L8.500 2.500z" fill="#333"/>`)}${arrow(6, 4)}</div>
      </div>
      <div class="ribbon">${PANELS.map((p) => this.panel(p))}</div>
      <div class="files">
        <div class="ftab" style="width:158px;margin-left:20px"><svg class="bgd" width="160" height="27"><path d="M0 27C8 25 8 4 18 2Q20 1 24 1H150Q158 1 160 10V27Z" fill="#515151" stroke="#5a5a5a"/></svg><span style="margin-left:19px;color:#a9a9a9">Start</span></div>
        <div class="ftab" style="width:160px"><svg class="bgd" width="162" height="27"><defs><linearGradient id="ft" x2="0" y2="1"><stop stop-color="#7c7c7c"/><stop offset="1" stop-color="#5b5b5b"/></linearGradient></defs><path d="M-6 27C4 25 2 4 10 2Q12 1 16 1H142Q150 1 152 8C155 16 156 25 162 27Z" fill="url(#ft)"/></svg>
          <span style="margin-left:15px">3D Initials</span><span style="margin-left:50px">${icon(9, 9, svg`<path d="M.5 .5l8 8M8.500 .5l-8 8" stroke="#454545" stroke-width="2"/>`)}</span></div>
        <div class="ftab" style="width:28px;margin-left:5px;height:24px">${plusTab("M0 2Q0 .5 3 .5H16Q22 .5 25 11Q27 19.500 24 19.500H10Q4 18 3 11Z", 27, 20)}</div>
      </div>
      <div class="ledge"></div>
      <div class="stage"><cad-viewport></cad-viewport><div class="strip"></div><div class="teal"></div><div class="rest"></div></div>
      <div class="layouts">
        <div class="ltab on" style="width:73px;margin-left:13px">Model</div>
        <div class="ltab" style="width:80px;margin-left:1px">Layout1</div>
        <div class="ltab" style="width:81px">Layout2</div>
        <div style="margin-left:5px">${plusTab("M6 1H28V8Q26 18 22 21H3Q0 21 1 17Q3 5 6 1Z", 29, 22)}</div>
      </div>
      <div class="status">${row(0, STATUS.map(([x, w, cells]) => [x, w, html`<div class="sc">${row(x + 1, cells)}</div>`] as Cell))}</div>

      <div class="app">${icon(39, 39, svg`<path d="M15 4L24 31H27L15 4L3 28H7Z" fill="#a01818"/><path d="M4 27l4-9v9zM26 27l-3-9v9z" fill="#8a0e0e"/><path d="M30 17H37L33.500 21Z" fill="#333"/>`)}</div>
      ${TIPS.map(([t, x, y, w]) => html`<div class="tip" style="left:${x}px;top:${y}px;width:${w}px">${t}</div>`)}
      ${DIM_TIPS.map(([t, x, y, w]) => html`<div class="tip dim ${t === "F" ? "f" : ""}" style="left:${x}px;top:${y}px;width:${w}px">${t}</div>`)}
    `;
  }
}
